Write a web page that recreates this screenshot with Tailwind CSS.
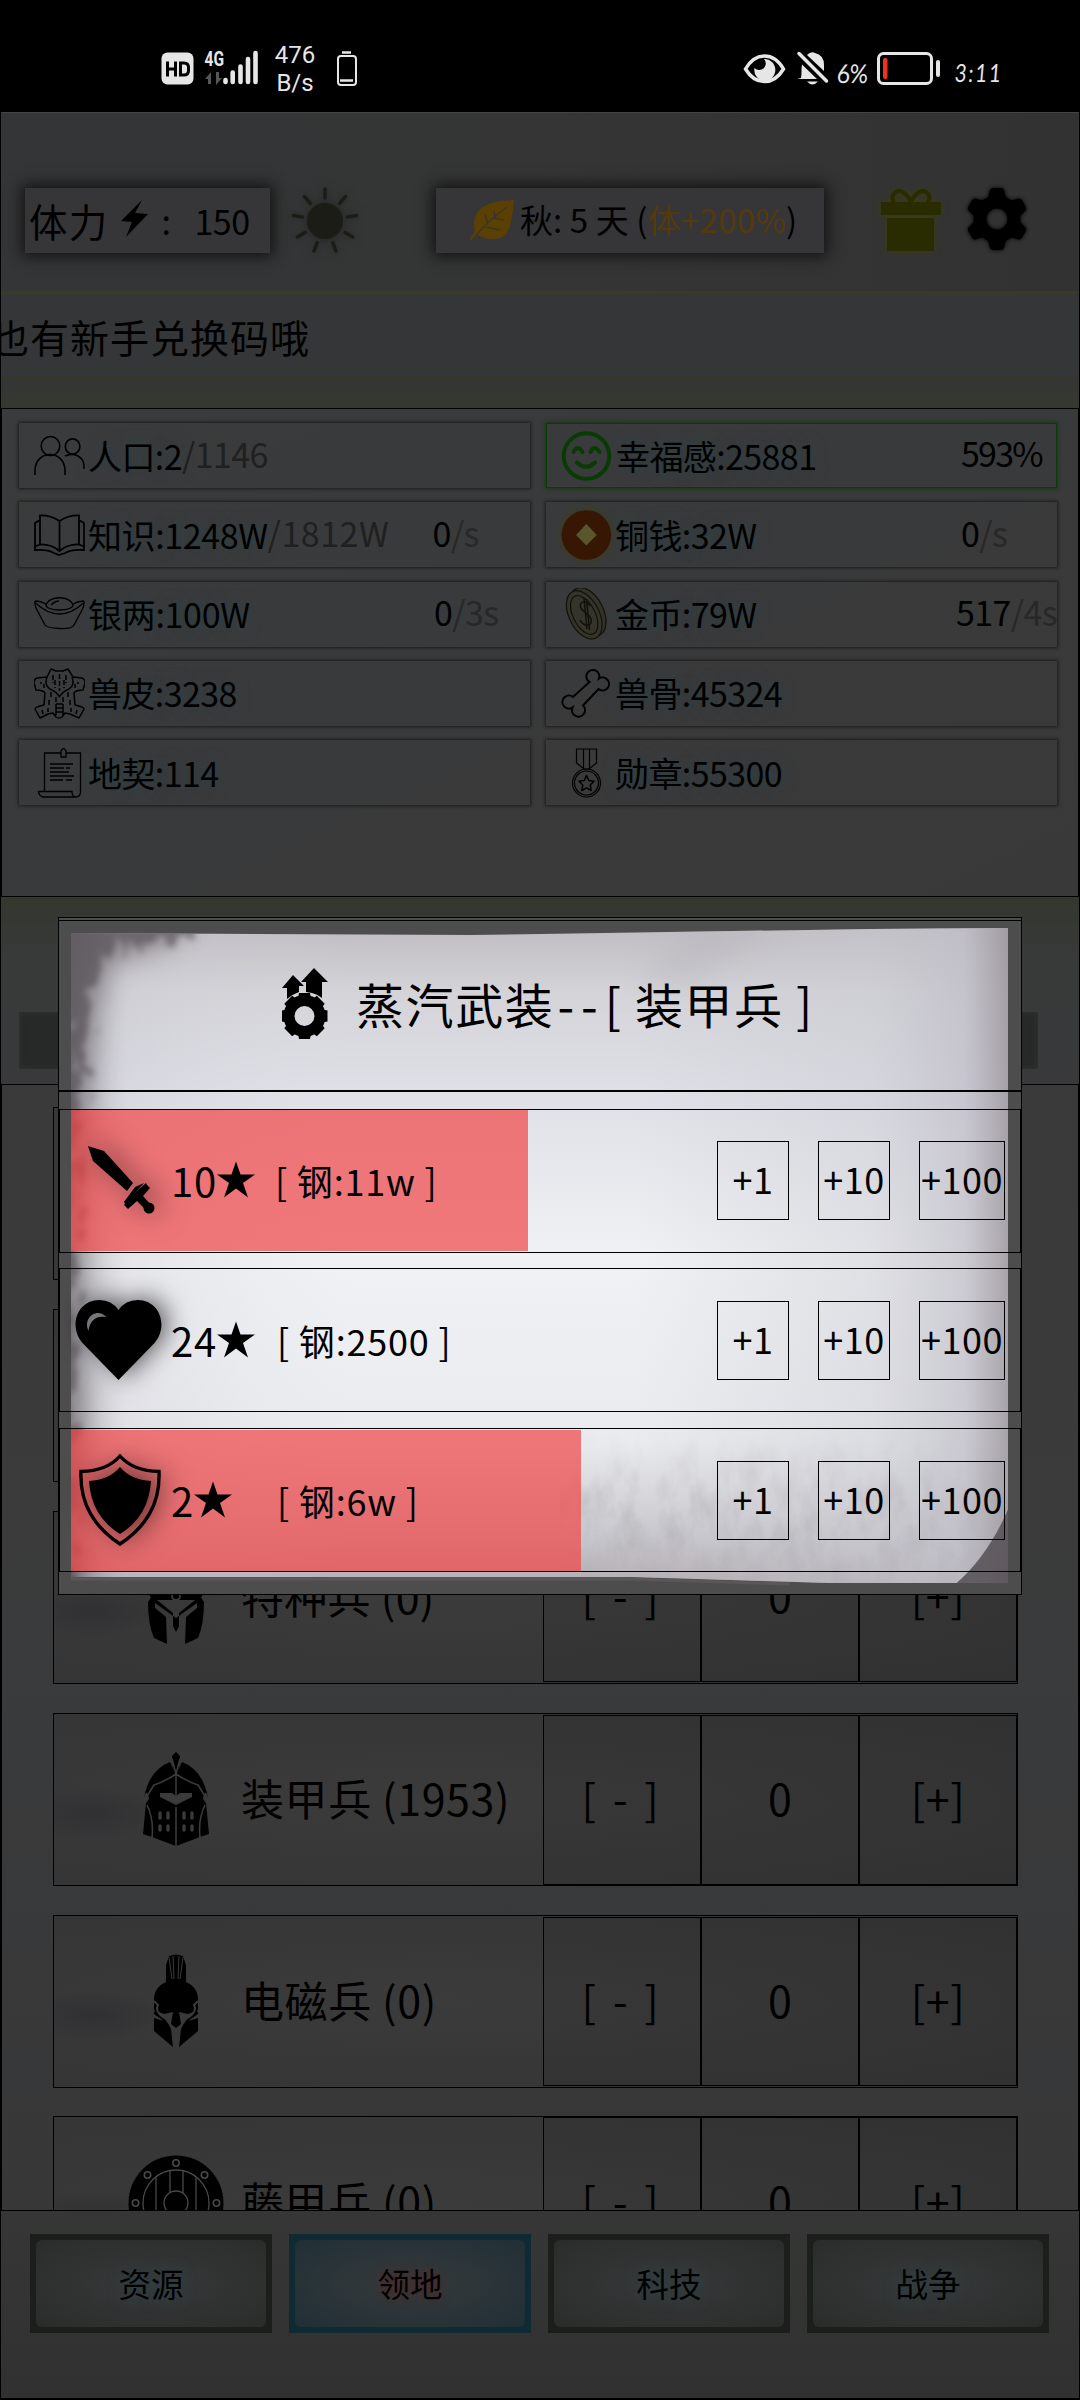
<!DOCTYPE html>
<html lang="zh-CN">
<head>
<meta charset="utf-8">
<title>领地</title>
<script src="https://cdn.jsdelivr.net/npm/@tailwindcss/browser@4"></script>
</head>
<body class="bg-black">
<div class="relative flex h-[2400px] w-[1080px] flex-col overflow-hidden bg-black font-['Noto_Sans_CJK_SC',sans-serif] leading-none whitespace-nowrap text-black">

  <!-- status bar -->
  <div class="flex h-[112px] shrink-0 items-start text-[#e6e6e6]">
    <svg class="ml-[161px] mt-[46px] shrink-0" width="100" height="44" viewBox="161 46 100 44">
      <rect x="161.5" y="52.5" width="32" height="32" rx="6" fill="#e6e6e6"/>
      <path d="M167.500 61.500v15M175.500 61.500v15M167.500 69h8M180.500 63v12h3.500q4.500 0 4.500-4.500v-3q0-4.500-4.500-4.500z" fill="none" stroke="#000" stroke-width="3"/>
      <text x="204.500" y="66" font-family="Roboto" font-weight="700" font-size="20" textLength="19.500" lengthAdjust="spacingAndGlyphs" fill="#e6e6e6">4G</text>
      <path d="M205 79l6-7v12h-3v-5zM222 78l-6 7v-13h3v6z" fill="#555"/>
      <path d="M225.500 80v2M232.700 72.500v9.500M240.500 66.500v15.500M248 59v23M255.500 53v29" stroke="#e6e6e6" stroke-width="4.600" stroke-linecap="round"/>
    </svg>
    <div class="mt-[41px] ml-[13px] flex w-[42px] flex-col items-center font-['Roboto',sans-serif] text-[24px] leading-[28px]"><span>476</span><span>B/s</span></div>
    <svg class="ml-[20px] mt-[50px] shrink-0" width="22" height="38" viewBox="336 50 22 38" fill="none" stroke="#e6e6e6"><path d="M342 52.500h9" stroke-width="2.500"/><rect x="338" y="56" width="18" height="29" rx="3" stroke-width="2"/><path d="M340 80.500h13" stroke-width="2.500"/></svg>
    <svg class="ml-[385px] mt-[49px] shrink-0" width="86" height="38" viewBox="743 50 86 38">
      <path d="M745.500 70Q753 57 764.500 57T783.500 70Q776 82.500 764.500 82.500T745.500 70z" fill="none" stroke="#e6e6e6" stroke-width="3.500"/>
      <path d="M764 60a10.500 11 0 1 1-9.500 9a5.500 5.500 0 0 0 9.500-9z" fill="#e6e6e6"/>
      <path d="M801 79c1-5 0-9 1-13.500L817 80h-20zM807 56q4-4 8-2q9 2 9 12v6l-16-15z" fill="#e6e6e6"/><path d="M807 82.500h11q-5.500 6-11 0z" fill="#e6e6e6"/>
      <path d="M799 54.500L826.500 82" stroke="#e6e6e6" stroke-width="3.500" stroke-linecap="round"/>
    </svg>
    <div class="mt-[60px] ml-[8px] w-[33px] font-['Lato',sans-serif] text-[26px] tracking-[-0.5px]"><span class="inline-block origin-left -skew-x-3 scale-x-[0.88]">6%</span></div>
    <svg class="ml-[6px] mt-[50px] shrink-0" width="66" height="38" viewBox="877 50 66 38" fill="none"><rect x="879.500" y="53.500" width="53" height="30" rx="5" stroke="#e6e6e6" stroke-width="3"/><rect x="884" y="58" width="4.500" height="21" rx="2" fill="#f03022"/><rect x="937" y="60" width="4" height="17" rx="2" fill="#e6e6e6"/></svg>
    <div class="mt-[60px] ml-[13px] font-['Lato',sans-serif] text-[25px] tracking-[2.500px]"><span class="inline-block origin-left -skew-x-6 scale-x-[0.8]">3:11</span></div>
  </div>

  <!-- top bar -->
  <div class="mx-px flex h-[179px] shrink-0 items-start border-t border-[#454545] bg-linear-to-r from-[#343537] via-[#353535] to-[#323233] pt-[75px] pl-[24px]">
    <div class="flex h-[65px] w-[245px] shrink-0 items-center bg-[#363638] pl-[4px] shadow-[0_0_14px_3px_#111]">
      <span class="text-[38.500px] tracking-[1.200px]">体力</span>
      <svg class="ml-[13px] mb-1 shrink-0" width="27" height="37" viewBox="0 0 27 37"><path d="M21 0L0 21l11 1-6 15L27 14l-13-1z"/></svg>
      <span class="ml-[13px] w-[33px] text-[34px]">:</span>
      <span class="text-[34px] tracking-[-0.5px]">150</span>
    </div>
    <svg class="ml-[22px] mt-[-1px] shrink-0 drop-shadow-[0_0_5px_#222]" width="66" height="68" viewBox="-33 -34 66 68">
      <circle r="18" fill="#1c1c17"/>
      <g stroke="#1c1c17" stroke-width="3.500" stroke-linecap="round"><path id="ray" d="M0-23v-9"/><use href="#ray" transform="rotate(40)"/><use href="#ray" transform="rotate(80)"/><use href="#ray" transform="rotate(120)"/><use href="#ray" transform="rotate(160)"/><use href="#ray" transform="rotate(200)"/><use href="#ray" transform="rotate(240)"/><use href="#ray" transform="rotate(280)"/><use href="#ray" transform="rotate(320)"/></g>
    </svg>
    <div class="ml-[78px] flex h-[65px] w-[388px] shrink-0 items-center bg-[#363638] pl-[34px] shadow-[0_0_14px_3px_#111]">
      <svg class="shrink-0" width="45" height="42" viewBox="0 0 45 42"><path d="M44 0C30 1 4 2 4 24q0 4 1 7l-5 8 2 2 6-6q10 6 22 3C42 34 42 14 44 0z" fill="#5a4103"/><path d="M2 40C12 28 24 16 37 7M18 24l-3-10M25 17l-1-6M16 27l14 3M24 18l10 2" fill="none" stroke="#3b3524" stroke-width="1.500"/></svg>
      <span class="ml-[5px] mb-[3px] text-[33px] tracking-[0.100px]">秋: 5 天 (<span class="tracking-[0.300px] text-[#54390d]">体+200%</span>)</span>
    </div>
    <svg class="ml-[55px] mt-[-2px] shrink-0 drop-shadow-[0_0_3px_#3c3d08]" width="64" height="68" viewBox="879 185 64 68"><path d="M881 201h60v13h-60zM887 217h47v33h-47z" fill="#292b01"/><path d="M911 202c-3-9-10-14-15-11s-4 7-2 11M911 202c3-9 10-14 15-11s4 7 2 11" fill="none" stroke="#292b01" stroke-width="4"/></svg>
    <svg class="ml-[24px] mt-[-1px] shrink-0 drop-shadow-[0_0_2px_#000]" width="60" height="64" viewBox="-30 -32 60 64"><g><path id="gt" d="M-9-21l2-8q1-2 3-2h8q2 0 3 2l2 8z"/><use href="#gt" transform="rotate(60)"/><use href="#gt" transform="rotate(120)"/><use href="#gt" transform="rotate(180)"/><use href="#gt" transform="rotate(240)"/><use href="#gt" transform="rotate(300)"/></g><circle r="17" fill="none" stroke="#000" stroke-width="13"/></svg>
  </div>

  <!-- scrolling notice -->
  <div class="mx-px flex h-[89px] shrink-0 items-center border-t-[3px] border-b-[3px] border-t-[#3c3c1a] border-b-[#363724] bg-[#353637]">
    <span class="-ml-[11px] pt-[2px] text-[39px] tracking-[1px]">也有新手兑换码哦</span>
  </div>
  <div class="mx-px h-[28px] shrink-0 bg-linear-to-b from-[#353536] to-[#34382f]"></div>

  <!-- resources -->
  <div class="mx-px grid h-[489px] shrink-0 auto-rows-[65px] grid-cols-[511px_511px] content-start gap-x-[16px] gap-y-[14.300px] border border-black bg-linear-to-br from-[#3a3b3c] to-[#39393a] pt-[14px] pl-[17px] text-[34px] tracking-[-0.6px]">
    <div class="flex items-center pl-[15px] shadow-[0_0_3px_1px_#1b1b1b]">
      <svg class="shrink-0" width="51" height="50" viewBox="0 0 51 50" fill="none" stroke="#000" stroke-width="1.600"><ellipse cx="16.500" cy="15" rx="9.300" ry="9.500"/><ellipse cx="38.600" cy="15.500" rx="7.300" ry="7.600"/><path d="M1 44v-4C1 18 31 18 31 40v4M31 25c8-4 19 0 19 10v3"/></svg>
      <span class="ml-[3px] [text-shadow:0_0_14px_#2c4348]">人口:2</span><span class="mb-1 text-[#202020]">/1146</span>
    </div>
    <div class="flex items-center border border-[#0c3a0a] pl-[14px] shadow-[0_0_4px_1px_#163a14]">
      <svg class="shrink-0" width="51" height="50" viewBox="0 0 51 50" fill="none" stroke="#083c04" stroke-width="4" stroke-linecap="round"><circle cx="25.500" cy="25" r="22.800"/><path d="M12.500 21q4-8 9 0M29.500 21q4-8 9 0M16 31.500q9.500 8.500 18 0"/></svg>
      <span class="ml-[4px] w-[345px] [text-shadow:0_0_14px_#2c4348]">幸福感:25881</span><span class="mb-[5px] tracking-[-1.800px]">593%</span>
    </div>
    <div class="flex items-center pl-[15px] shadow-[0_0_3px_1px_#1b1b1b]">
      <svg class="shrink-0" width="51" height="50" viewBox="0 0 51 50" fill="none" stroke="#000" stroke-width="1.800"><path d="M25.500 11Q16 5 6 5.500v29Q17 34 25.500 41Q34 34 45 34.500v-29Q35 5 25.500 11v30M6 10l-5 3v27q12-1 19 3l5 2 6-2q7-4 19-3V13l-5-3M1 36.500l5-2M50 36.500l-5-2"/></svg>
      <span class="ml-[3px] tracking-[-0.4px] [text-shadow:0_0_14px_#2c4348]">知识:1248W</span><span class="mb-1 w-[165px] tracking-[0.500px] text-[#202020]">/1812W</span><span class="mb-1">0<span class="text-[#282828]">/s</span></span>
    </div>
    <div class="flex items-center pl-[15px] shadow-[0_0_3px_1px_#1b1b1b]">
      <svg class="shrink-0 drop-shadow-[0_0_4px_#3c3c14]" width="51" height="50" viewBox="0 0 51 50"><circle cx="25.300" cy="25" r="24.800" fill="#371703"/><path d="M25.300 14l10.500 11-10.500 10.500L15 25z" fill="#57562c"/></svg>
      <span class="ml-[3px] w-[346px] [text-shadow:0_0_14px_#2c4348]">铜钱:32W</span><span class="mb-1">0<span class="text-[#282828]">/s</span></span>
    </div>
    <div class="flex items-center pl-[15px] shadow-[0_0_3px_1px_#1b1b1b]">
      <svg class="shrink-0" width="51" height="50" viewBox="0 0 51 50" fill="none" stroke="#000" stroke-width="1.300"><path d="M1 12q6 0 11 3M50 12q-6 0-11 3M1 12q-.5 5 2 9l8 15q2 3 14.500 3.500T40 36l8-15q2.500-4 2-9M12 17C13 6 38 6 39 17M12 15c-2 8 29 8 27 0M1.500 14Q25.500 36 49.500 14M17 16q4-4 8-4"/></svg>
      <span class="ml-[3px] w-[346px] tracking-[-0.3px] [text-shadow:0_0_14px_#2c4348]">银两:100W</span><span class="mb-1">0<span class="text-[#282828]">/3s</span></span>
    </div>
    <div class="flex items-center pl-[15px] shadow-[0_0_3px_1px_#1b1b1b]">
      <svg class="shrink-0" width="51" height="52" viewBox="0 0 51 52" fill="none" stroke="#111109" stroke-width="1.200"><g transform="rotate(-27 25 26)"><ellipse cx="28" cy="25" rx="15" ry="26" fill="#333229"/><ellipse cx="23" cy="26" rx="15" ry="26" fill="#35342b"/><ellipse cx="23" cy="26" rx="11" ry="21"/></g><path d="M29 18c-4-7-12-4-9 2 3 5 8 6 10 11 2 7-6 9-11 1M23 10l3 31M25.500 11l3 31" stroke-width="1.500"/></svg>
      <span class="ml-[3px] w-[342px] [text-shadow:0_0_14px_#2c4348]">金币:79W</span><span class="mb-1">517<span class="text-[#282828]">/4s</span></span>
    </div>
    <div class="flex items-center pl-[15px] shadow-[0_0_3px_1px_#1b1b1b]">
      <svg class="shrink-0" width="51" height="51" viewBox="0 0 51 51" fill="none" stroke="#000" stroke-width="1.500" stroke-linejoin="round"><path d="M13 9l4-8 5 2h7l5-2 5 8 9 1q3 1 3 5l-2 7q-7 0-9 3l1 12q9 2 9 4l-5 9-9-4-5-1-3 4q-3 2-6 0l-3-4-5 1-8 4-5-9q0-2 9-4l1-12q-2-3-9-3l-2-7q0-4 3-5zM13 9q-3 8 3 12 7 3 9.500 8Q28 24 35 21q6-4 3-12M22 36h7M22 40h7M22 44h7M22 36v11M29 36v11"/><path d="M19 7v8M25.500 6v17M32 7v8M17 24v5M34 24v5M22 29v5M29 29v5M15 32v6M36 32v6M7 14v2M44 14v2M10 20v-4M41 20v-4M8 42l1 4M43 42l-1 4M14 40v4M37 40v4M21 12v8M30 12v8" stroke-dasharray="5 2"/></svg>
      <span class="ml-[3px] [text-shadow:0_0_14px_#2c4348]">兽皮:3238</span>
    </div>
    <div class="flex items-center pl-[15px] shadow-[0_0_3px_1px_#1b1b1b]">
      <svg class="shrink-0" width="51" height="50" viewBox="0 0 51 50" fill="none" stroke="#000" stroke-width="2"><path d="M38 10.500a6.500 6.500 0 1 0-9.500 3.500L12 29a6.500 6.500 0 1 0-.5 10.500a6.500 6.500 0 1 0 10.500-2L37.500 21a6.500 6.500 0 1 0 .5-10.500z"/></svg>
      <span class="ml-[3px] [text-shadow:0_0_14px_#2c4348]">兽骨:45324</span>
    </div>
    <div class="flex items-center pl-[15px] shadow-[0_0_3px_1px_#1b1b1b]">
      <svg class="shrink-0" width="51" height="50" viewBox="0 0 51 50" fill="none" stroke="#000" stroke-width="1.300"><path d="M27 5H10.500v38.500M32 5h14.500v39q0 5-5 5H9q-4-1-4.500-5.500H38q0 5.500 4 5.500M27 9V3q2.500-5 5 0v6zM16 16h23M16 20h14M32 20h4M16 24h19M16 28h24M16 32h13M32 32h6"/></svg>
      <span class="ml-[3px] [text-shadow:0_0_14px_#2c4348]">地契:114</span>
    </div>
    <div class="flex items-center pl-[15px] shadow-[0_0_3px_1px_#1b1b1b]">
      <svg class="shrink-0" width="51" height="50" viewBox="0 0 51 50" fill="none" stroke="#000" stroke-width="1.200"><path d="M15.500 1h20v14L28 21h-5l-7.500-6zM22.500 1v20M28.500 1v20"/><circle cx="25.500" cy="35" r="14"/><circle cx="25.500" cy="35" r="12"/><path d="M25.500 27.500l2.300 5 5.200.8-3.800 3.700 1 5.500-4.700-2.600-4.700 2.600 1-5.500-3.800-3.700 5.200-.8z" stroke-width="1.500" stroke-linejoin="round"/></svg>
      <span class="ml-[3px] [text-shadow:0_0_14px_#2c4348]">勋章:55300</span>
    </div>
  </div>

  <!-- sub tabs -->
  <div class="mx-px h-[187px] shrink-0 bg-linear-to-b from-[#33372d] via-[#383939] via-30% to-[#39393b] pt-[115px] pl-[18px]">
    <div class="h-[57px] w-[1019px] bg-[#272929] shadow-[inset_0_0_6px_#333]"></div>
  </div>

  <!-- troops -->
  <div class="mx-px flex h-[1126px] shrink-0 flex-col gap-[28.900px] overflow-hidden border-x border-t border-black bg-linear-to-b from-[#3a3a3a] via-[#3a3b3c] to-[#373738] pt-[22px] pl-[51px] text-[43px]">
    <div class="h-[173px] w-[965px] shrink-0 border border-black bg-[#383839]"></div>
    <div class="h-[173px] w-[965px] shrink-0 border border-black bg-[#383839]"></div>
    <div class="flex h-[173px] w-[965px] shrink-0 border border-black bg-[radial-gradient(ellipse_80px_26px_at_4%_58%,#303033,transparent),radial-gradient(at_40%_50%,#3b3b3b,#343435)]">
      <div class="flex w-[489px] items-center pl-[92px]">
        <svg class="shrink-0" width="60" height="94" viewBox="-30 0 60 94"><path d="M-28 42Q-20 5 0 5T28 42L24 50-24 50z"/><path d="M-24 46L-3 63V76l3 6 3-6V63L24 46l4 6q0 22-6 36L9 94l1-27 11-9V53L0 68l-21-15v5l11 9 1 27-13-6q-6-14-6-36z"/><circle cy="46" r="4" fill="none" stroke="#39393a" stroke-width="2"/></svg>
        <span class="ml-[35px] mb-1 tracking-[0.300px]">特种兵 (0)</span>
      </div>
      <div class="mt-px grid h-[169px] w-[474px] grid-cols-[158px_158px_157px] border-l border-black bg-black/5 text-center leading-[160px]"><span class="border-y border-r-2 border-black tracking-[3.500px]">[ - ]</span><span class="border-y border-r-2 border-black">0</span><span class="border-y border-r border-black tracking-[0.500px]">[+]</span></div>
    </div>
    <div class="flex h-[173px] w-[965px] shrink-0 border border-black bg-[radial-gradient(ellipse_80px_26px_at_4%_58%,#303033,transparent),radial-gradient(at_40%_50%,#3b3b3b,#343435)]">
      <div class="flex w-[489px] items-center pl-[89px]">
        <svg class="shrink-0" width="66" height="94" viewBox="-33 0 66 94"><path d="M-33 82l3-31 3-4Q-29 35-32 46Q-27 18-6 10L0 22 6 10Q27 18 32 46 29 35 27 47l3 4 3 31-9 3L0 94l-24-9z"/><path d="M0 0l4 4-2 17h-4L-4 4z"/><path d="M-32 49l10-16Q-12 30 0 22 12 30 22 33L32 49M-29 53q7 14 5 33M29 53q-7 14-5 33M0 22v23M0 55v39M-4 7L0 22 4 7" fill="none" stroke="#3a3a3b" stroke-width="1.600"/><path d="M-16 41h12l4 3 4-3h12v4L0 53l-16-8z" fill="#3b3b3c"/><path d="M-16 61v5M-8 61v5M8 61v5M16 61v5M-16 74v4M-8 74v4M8 74v4M16 74v4" stroke="#3a3a3b" stroke-width="3.400" stroke-linecap="round"/></svg>
        <span class="ml-[32px] mb-1 tracking-[0.600px]">装甲兵 (1953)</span>
      </div>
      <div class="mt-px grid h-[170px] w-[474px] grid-cols-[158px_158px_157px] border-l border-black bg-black/5 text-center leading-[162px]"><span class="border-y border-r-2 border-black tracking-[3.500px]">[ - ]</span><span class="border-y border-r-2 border-black">0</span><span class="border-y border-r border-black tracking-[0.500px]">[+]</span></div>
    </div>
    <div class="flex h-[173px] w-[965px] shrink-0 border border-black bg-[radial-gradient(ellipse_80px_26px_at_4%_58%,#303033,transparent),radial-gradient(at_40%_50%,#3b3b3b,#343435)]">
      <div class="flex w-[489px] items-center pl-[99px]">
        <svg class="shrink-0" width="46" height="94" viewBox="-23 0 46 94"><path d="M-7 2Q0-1 7 2l3 9v17Q22 33 22 46v10L12 60 3 58l2 12-5 4-5-4 2-12-9 2-10-4V46q0-13 12-18V11z"/><path d="M-7 3l3 22M-3 2l1 23M3 2L2 25M7 3L4 25" stroke="#38383a" stroke-width="1.100"/><path d="M-22 60q0-4 3-3 10 9 14 18l2 18L-22 77V64l10 3zM22 60q0-4-3-3Q9 66 5 75L3 93 22 77V64l-10 3z"/><path d="M-22 47l4 4q-4 7 8 14M22 47l-4 4q4 7-8 14" fill="none" stroke="#3a3a3b" stroke-width="2"/></svg>
        <span class="ml-[42px] mb-1 tracking-[0.600px]">电磁兵 (0)</span>
      </div>
      <div class="mt-px grid h-[169px] w-[474px] grid-cols-[158px_158px_157px] border-l border-black bg-black/5 text-center leading-[162px]"><span class="border-y border-r-2 border-black tracking-[3.500px]">[ - ]</span><span class="border-y border-r-2 border-black">0</span><span class="border-y border-r border-black tracking-[0.500px]">[+]</span></div>
    </div>
    <div class="flex h-[173px] w-[965px] shrink-0 border border-black bg-[radial-gradient(ellipse_80px_26px_at_4%_58%,#303033,transparent),radial-gradient(at_40%_50%,#3b3b3b,#343435)]">
      <div class="flex w-[489px] items-center pl-[74px]">
        <svg class="shrink-0" width="96" height="96" viewBox="-48 -48 96 96" stroke="#48484a" stroke-width="1.300"><circle r="47.500" fill="#000" stroke="none"/><circle r="33" fill="#000"/><path d="M-20-26v52M-6-32v64M7-32v64M20-26v52"/><circle r="12" fill="#000"/><g stroke-width="1.600"><circle cy="-40" r="3.200"/><circle cx="28.500" cy="-28" r="3.200"/><circle cx="-28.500" cy="-28" r="3.200"/><circle cx="40.500" r="3.200"/><circle cx="-40.500" r="3.200"/></g></svg>
        <span class="ml-[17px] mb-1 tracking-[0.600px]">藤甲兵 (0)</span>
      </div>
      <div class="grid h-[170px] w-[474px] grid-cols-[158px_158px_157px] border-l border-black bg-black/5 text-center leading-[164px]"><span class="border-y border-r-2 border-black tracking-[3.500px]">[ - ]</span><span class="border-y border-r-2 border-black">0</span><span class="border-y border-r border-black tracking-[0.500px]">[+]</span></div>
    </div>
  </div>

  <!-- bottom navigation -->
  <div class="mx-px flex h-[189px] shrink-0 gap-[17px] border-y border-black bg-linear-to-b from-[#363637] to-[#313132] pt-[23px] pl-[29px] text-[32.500px]">
    <div class="h-[99px] w-[242px] bg-[#1c1e1b] p-[6px]"><div class="flex h-full items-center justify-center rounded-[6px] bg-radial from-[#363a3a] to-[#2b2b2b] pb-px [text-shadow:0_0_14px_#2c4348]">资源</div></div>
    <div class="h-[99px] w-[242px] bg-[#0f2a33] p-[6px]"><div class="flex h-full items-center justify-center rounded-[6px] bg-radial from-[#363a3b] to-[#202f36] pb-px [text-shadow:0_0_10px_#5a2222]">领地</div></div>
    <div class="h-[99px] w-[242px] bg-[#1c1e1b] p-[6px]"><div class="flex h-full items-center justify-center rounded-[6px] bg-radial from-[#363a3a] to-[#2b2b2b] pb-px [text-shadow:0_0_14px_#2c4348]">科技</div></div>
    <div class="h-[99px] w-[242px] bg-[#1c1e1b] p-[6px]"><div class="flex h-full items-center justify-center rounded-[6px] bg-radial from-[#363a3a] to-[#2b2b2b] pb-px [text-shadow:0_0_14px_#2c4348]">战争</div></div>
  </div>

  <!-- upgrade dialog -->
  <div class="absolute top-[917px] left-[58px] flex h-[678px] w-[964px] flex-col border border-black bg-[#4e4d4e]">
    <svg class="absolute inset-0" width="962" height="676" viewBox="59 918 962 676">
      <defs>
        <linearGradient id="v" x1="0" y1="0" x2="0" y2="1"><stop offset="0" stop-color="#bfbcc1"/><stop offset=".1" stop-color="#d3d3d8"/><stop offset=".25" stop-color="#dfdfe7"/><stop offset=".5" stop-color="#f0f1f4"/><stop offset=".78" stop-color="#eaebef"/><stop offset=".93" stop-color="#c6c5cb"/><stop offset="1" stop-color="#b3adb3"/></linearGradient>
        <linearGradient id="h"><stop offset="0" stop-color="#77747a" stop-opacity=".5"/><stop offset=".06" stop-color="#c4c2cc" stop-opacity=".25"/><stop offset=".3" stop-color="#e0e0e8" stop-opacity="0"/><stop offset=".6" stop-color="#c8c8d0" stop-opacity="0"/><stop offset=".85" stop-color="#c8c8d0" stop-opacity=".4"/><stop offset=".95" stop-color="#bebcc6" stop-opacity=".7"/><stop offset="1" stop-color="#989299" stop-opacity=".85"/></linearGradient>
        <filter id="g" x="-20%" y="-20%" width="140%" height="140%"><feTurbulence type="fractalNoise" baseFrequency=".09 .05" numOctaves="5" seed="4"/><feDisplacementMap in="SourceGraphic" scale="50" xChannelSelector="R" yChannelSelector="G"/><feGaussianBlur stdDeviation="3"/></filter>
        <filter id="s" x="-20%" y="-20%" width="140%" height="140%"><feGaussianBlur stdDeviation="12"/></filter>
        <filter id="n" x="0" y="0" width="100%" height="100%"><feTurbulence type="fractalNoise" baseFrequency=".05 .025" numOctaves="5" seed="8"/><feColorMatrix values="0 0 0 0 .45 0 0 0 0 .44 0 0 0 0 .47 2.200 0 0 0 -.9"/><feComposite in2="SourceGraphic" operator="in"/></filter>
        <linearGradient id="f" x1="0" y1="0" x2="0" y2="1"><stop offset="0" stop-opacity="0"/><stop offset=".5" stop-opacity=".7"/><stop offset="1" stop-opacity="1"/></linearGradient>
        <clipPath id="c"><path d="M71 933l400 2 400-6 137-1v655H830l-200-6H71z"/></clipPath>
      </defs>
      <path d="M59 920.500h962" stroke="#000"/>
      <g clip-path="url(#c)">
        <rect x="71" y="925" width="940" height="662" fill="url(#v)"/>
        <rect x="71" y="925" width="940" height="662" fill="url(#h)"/>
        <path d="M690 925h90l-90 60-50-5z" fill="#b0aeb6" opacity=".3" filter="url(#s)"/>
        <path d="M55 915h140l-25 30-60 20-14 50-8 90-6 150 4 340H55z" fill="#5d575d" opacity=".5" filter="url(#s)"/>
        <path d="M55 915h145l-8 22-70 8-28 30-10 60-9 120-3 430H55z" fill="#4b454b" opacity=".55" filter="url(#g)"/>
        <rect x="560" y="1430" width="450" height="160" fill="url(#f)" filter="url(#n)" opacity=".75"/>
        <path d="M1012 1500v90h-64q40-30 64-90z" fill="#554f53" opacity=".85"/>
      </g>
      <path d="M71 1579h559l160 5" stroke="#5e5b5d" stroke-width="3" fill="none" opacity=".7"/>
    </svg>
    <div class="relative flex h-[174px] shrink-0 items-center border-b-2 border-black pb-[2px] pl-[223px]">
      <svg class="mt-[2px] shrink-0" width="47" height="72" viewBox="0 0 47 72"><path d="M11 7l11 11h-5v6q-6 2-12 7V20H0zM32 0l14 14h-6v16q-5-4-10-5l-6-1V14h-5z"/><g transform="translate(22.500 48)"><circle r="15.500" fill="none" stroke="#000" stroke-width="11"/><path id="t" d="M-6.500-18l1-5h11l1 5z"/><use href="#t" transform="rotate(45)"/><use href="#t" transform="rotate(90)"/><use href="#t" transform="rotate(135)"/><use href="#t" transform="rotate(180)"/><use href="#t" transform="rotate(225)"/><use href="#t" transform="rotate(270)"/><use href="#t" transform="rotate(315)"/></g></svg>
      <span class="ml-[27px] text-[48px] tracking-[1.600px]">蒸汽武装<span class="ml-[3px] tracking-[7px]">--</span>[ 装甲兵 ]</span>
    </div>
    <div class="relative mt-[17px] flex h-[144px] shrink-0 items-center border border-black">
      <div class="absolute top-0 left-[11px] h-[141px] w-[457px] bg-[#f14546]/70"></div>
      <svg class="relative ml-[28px] mb-[2px] shrink-0 drop-shadow-[6px_0_14px_#0008]" width="68" height="68" viewBox="0 0 68 68"><path d="M0 0l16 5 29 32-6 8L5 15zM58 38l4 4-7 8 8 9-5 5-9-9-9 8-4-4 5-6zM47 41l9-4-18 20-2-1z"/><path d="M36 56l22-19 2 5-20 20z"/><circle cx="61" cy="62" r="5.500"/></svg>
      <div class="relative ml-[15px] mb-[2px] flex w-[104px] items-center text-[40px] tracking-[0.800px]">10<svg class="mb-[2px]" width="38" height="37" viewBox="0 0 38 36"><path d="M19 0l4.500 13H38L26 21.500 31 36 19 27 7 36l5-14.500L0 13h14.500z"/></svg></div>
      <div class="relative mb-[2px] w-[442px] text-[36px] tracking-[0.800px]">[ 钢:11w ]</div>
      <div class="relative mb-px flex gap-[29px] text-center text-[36px] leading-[72px] tracking-[0.500px]"><div class="h-[79px] w-[72px] border border-black">+1</div><div class="h-[79px] w-[72px] border border-black">+10</div><div class="h-[79px] w-[86px] border border-black">+100</div></div>
    </div>
    <div class="relative mt-[15px] flex h-[144px] shrink-0 items-center border border-black">
      <svg class="relative ml-[14px] shrink-0 drop-shadow-[6px_-2px_12px_#0009]" width="89" height="80" viewBox="0 0 88 80"><path d="M44 80L8 43C-6 27 2 0 25 0q12 0 19 10Q51 0 63 0c23 0 31 27 17 43z"/><path d="M14 31C8 18 22 7 32 17 20 15 15 22 14 31z" fill="#77777b"/></svg>
      <div class="relative ml-[8px] flex w-[106px] items-center text-[40px] tracking-[0.800px]">24<svg class="mb-[2px]" width="38" height="37" viewBox="0 0 38 36"><path d="M19 0l4.500 13H38L26 21.500 31 36 19 27 7 36l5-14.500L0 13h14.500z"/></svg></div>
      <div class="relative w-[440px] text-[36px] tracking-[0.800px]">[ 钢:2500 ]</div>
      <div class="relative flex gap-[29px] text-center text-[36px] leading-[72px] tracking-[0.500px]"><div class="h-[79px] w-[72px] border border-black">+1</div><div class="h-[79px] w-[72px] border border-black">+10</div><div class="h-[79px] w-[86px] border border-black">+100</div></div>
    </div>
    <div class="relative mt-[16px] flex h-[144px] shrink-0 items-center border border-black">
      <div class="absolute top-px left-[11px] h-[141px] w-[510px] bg-[#f14546]/70"></div>
      <svg class="relative ml-[19px] shrink-0 drop-shadow-[6px_0_12px_#0008]" width="82" height="92" viewBox="0 0 82 92"><path d="M41 2Q28 17 2 17.500 0 63 41 90 82 63 80 17.500 54 17 41 2z" fill="none" stroke="#000" stroke-width="3.400"/><path d="M41 13Q30 26 10 27q2 35 31 53 29-18 31-53-20-1-31-14z"/></svg>
      <div class="relative ml-[10px] flex w-[106px] items-center text-[40px] tracking-[0.800px]">2<svg class="mb-[2px]" width="38" height="37" viewBox="0 0 38 36"><path d="M19 0l4.500 13H38L26 21.500 31 36 19 27 7 36l5-14.500L0 13h14.500z"/></svg></div>
      <div class="relative w-[440px] text-[36px] tracking-[0.800px]">[ 钢:6w ]</div>
      <div class="relative flex gap-[29px] text-center text-[36px] leading-[72px] tracking-[0.500px]"><div class="h-[79px] w-[72px] border border-black">+1</div><div class="h-[79px] w-[72px] border border-black">+10</div><div class="h-[79px] w-[86px] border border-black">+100</div></div>
    </div>
  </div>
</div>
</body>
</html>
